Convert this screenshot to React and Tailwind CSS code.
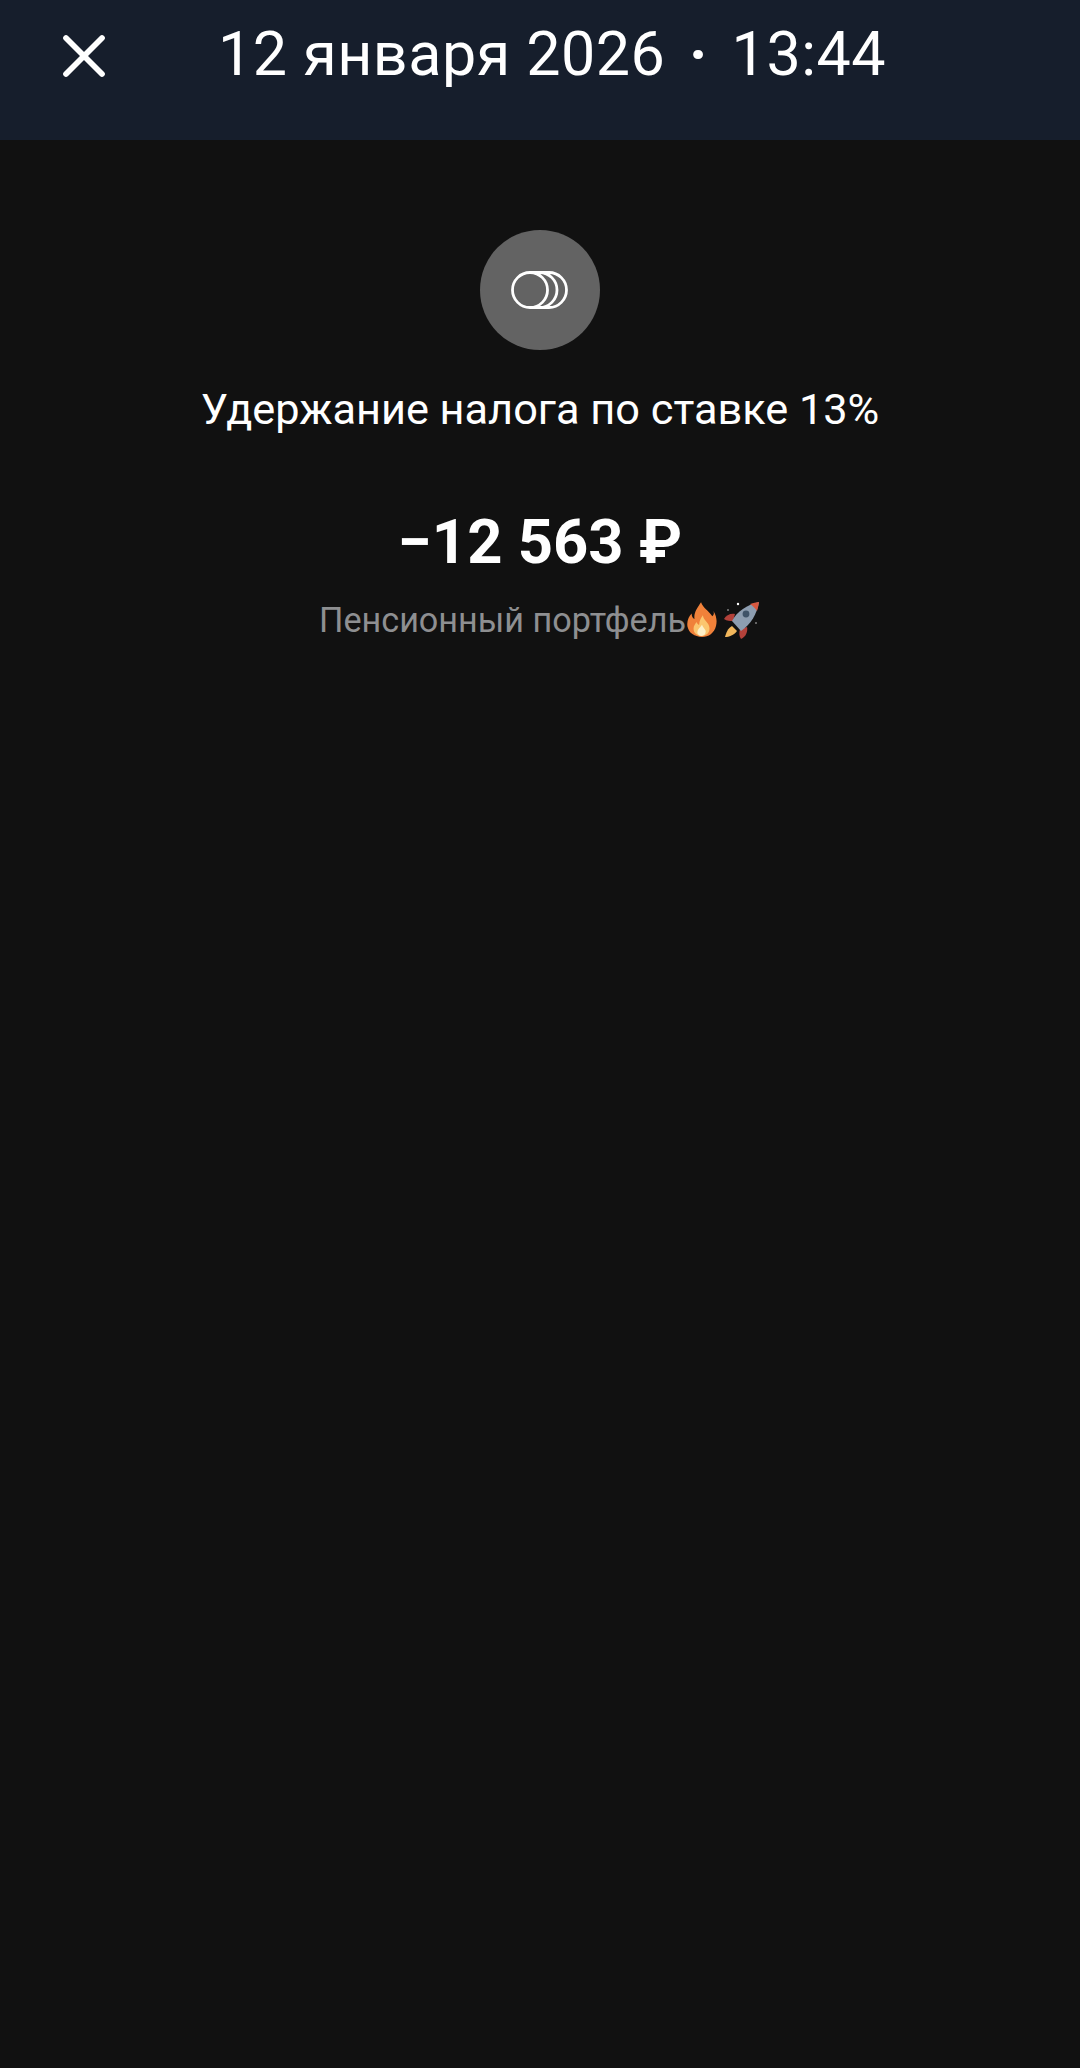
import { X } from "lucide-react";

function CoinsIcon() {
  return (
    <svg width="60" height="40" viewBox="0 0 60 40" fill="none" stroke="white" strokeWidth="2.8">
      <path d="M20 2.5 H39 A17.5 17.5 0 0 1 39 37.5 H20" />
      <path d="M29.5 2.5 A17.5 17.5 0 0 1 29.5 37.5" />
      <circle cx="20" cy="20" r="17.5" />
    </svg>
  );
}

function Fire() {
  return (
    <svg width="30" height="38" viewBox="0 0 32 38">
      <path d="M15 0 C17 6 23 9 27 15 C29 13 29 11 28 9 C32 15 32 21 31 25 C29 33 23 37 16 37 C8 37 2 33 0.5 26 C-0.5 20 2 15 5 12 C5 15 6 17 8 18 C7 11 11 6 15 0 Z" fill="#f0813a" />
      <path d="M17 14 C17 19 24 22 24 28 C24 33 20 36 16 36 C11 36 7 33 7 28 C7 25 9 23 10 21 C11 23 12 24 13 24 C13 20 15 17 17 14 Z" fill="#fbc66f" />
      <path d="M16 24 C17 27 20 29 20 31 C20 34 18 36 15.5 36 C13 36 11 34 11 32 C11 29 14 27 16 24 Z" fill="#fdf0c8" />
    </svg>
  );
}

function Rocket() {
  return (
    <svg width="38" height="40" viewBox="0 0 38 40">
      <path d="M12 13 C8 12 3 14 1 18 C4 20 7 20 10 20 Z" fill="#b3413a" />
      <path d="M24 26 C25 30 23 36 18 38 C16 35 16 32 17 28 Z" fill="#b3413a" />
      <path d="M9 25 C5 27 3 32 2 36 C6 36 11 34 14 30 Z" fill="#f2b75c" />
      <path d="M9 20 C14 10 24 4 36 1 C34 13 28 23 18 30 Z" fill="#8d9db0" />
      <path d="M27 3 C30 2 33 1.5 36 1 C35.5 4 35 7 34 10 C32 7 30 5 27 3 Z" fill="#d9583f" />
      <circle cx="23" cy="13" r="3.4" fill="#3f5368" />
      <circle cx="15" cy="3" r="1.2" fill="#ffffff" />
      <circle cx="5" cy="9" r="0.8" fill="#cccccc" />
      <circle cx="33" cy="22" r="0.8" fill="#cccccc" />
    </svg>
  );
}

export default function App() {
  return (
    <div className="min-h-[2068px] bg-[#111111] text-white font-['Roboto',sans-serif]">
      {/* Шапка */}
      <div className="h-[140px] bg-[#161e2c] flex items-start pl-[48px] pt-[20px]">
        <X className="w-[72px] h-[72px]" strokeWidth={1.9} />
        <div className="ml-[98px] mt-[2px] text-[61px] leading-[64px] tracking-[0.5px] whitespace-nowrap">
          12 января 2026 <span className="mx-[8px] font-bold">·</span> 13:44
        </div>
      </div>

      {/* Операция */}
      <div className="flex flex-col items-center pt-[90px]">
        <div className="w-[120px] h-[120px] rounded-full bg-[#636363] flex items-center justify-center">
          <CoinsIcon />
        </div>
        <div className="mt-[35px] text-[43.3px] leading-[50px] whitespace-nowrap">
          Удержание налога по ставке 13%
        </div>
        <div className="mt-[72px] text-[61.5px] leading-[70px] font-bold whitespace-nowrap">
          −12 563 ₽
        </div>
        <div className="mt-[21px] flex items-center text-[34.2px] leading-[44px] text-[#8e8f91] whitespace-nowrap">
          Пенсионный портфель
          <span className="ml-[1px]"><Fire /></span>
          <span className="ml-[6px] mt-[2px]"><Rocket /></span>
        </div>
      </div>
    </div>
  );
}
